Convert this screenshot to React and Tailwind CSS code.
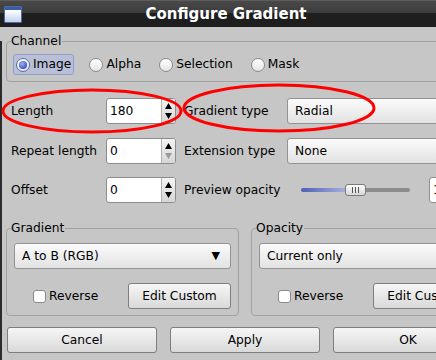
function Triangle({ up, disabled }) {
    return (
        <svg width="7" height="6" viewBox="0 0 7 6" className="block">
            <path d={up ? 'M3.5 0 L7 6 L0 6 Z' : 'M0 0 L7 0 L3.5 6 Z'} fill={disabled ? '#9a9a9a' : '#000'} />
        </svg>
    )
}

function Spin({ value, downDisabled, className = '' }) {
    return (
        <div className={`flex h-[26px] shrink-0 overflow-hidden rounded-[3px] border border-[#8c8c8c] bg-white ${className}`}>
            <div className="flex flex-1 items-center pl-[3px]">{value}</div>
            <div className="flex w-[14px] flex-col items-center justify-center gap-[4px] border-l border-[#b0b0b0] bg-[linear-gradient(to_bottom,#f4f4f4,#d6d6d6)]">
                <Triangle up />
                <Triangle disabled={downDisabled} />
            </div>
        </div>
    )
}

function Combo({ children, arrow, className = '' }) {
    return (
        <div className={`flex h-[26px] shrink-0 items-center rounded-[3px] border border-[#939393] bg-[linear-gradient(to_bottom,#fbfbfb,#e2e2e2)] pl-[7px] pr-[10px] ${className}`}>
            <span className="flex-1 whitespace-nowrap">{children}</span>
            {arrow ? <span className="text-[11px]">▼</span> : null}
        </div>
    )
}

function Button({ children, className = '' }) {
    return (
        <div className={`flex h-[26px] shrink-0 items-center justify-center whitespace-nowrap rounded-[3px] border border-[#7e7e7e] bg-[linear-gradient(to_bottom,#f6f6f6,#d9d9d9)] ${className}`}>
            {children}
        </div>
    )
}

function Radio({ label, checked }) {
    return (
        <div
            className={`flex h-[21px] shrink-0 items-center gap-[3px] rounded-[3px] border px-[2px] ${
                checked ? 'border-[#8e9dc8] bg-[#b8bfd7]' : 'border-transparent'
            }`}
        >
            <span
                className={`flex h-[14px] w-[14px] items-center justify-center rounded-full border bg-[linear-gradient(to_bottom,#ffffff,#e4e4e4)] ${
                    checked ? 'border-[#5b6aa5]' : 'border-[#8a8a8a]'
                }`}
            >
                {checked ? (
                    <span className="h-[8px] w-[8px] rounded-full bg-[radial-gradient(circle_at_40%_35%,#9fb4f0,#3a56c8_70%)]" />
                ) : null}
            </span>
            <span>{label}</span>
        </div>
    )
}

function Check({ label }) {
    return (
        <div className="flex items-center gap-[3px]">
            <span className="h-[13px] w-[13px] rounded-[3px] border border-[#8a8a8a] bg-white" />
            <span>{label}</span>
        </div>
    )
}

function Group({ label, className = '', children }) {
    return (
        <div className={`relative shrink-0 rounded-[4px] border border-[#a2a2a2] ${className}`}>
            <span className="absolute -top-[8px] left-[4px] bg-[#c6c6c6] pr-[1px] leading-[14px]">{label}</span>
            {children}
        </div>
    )
}

function App() {
    return (
        <div className="relative h-[360px] w-[436px] overflow-hidden bg-[#c6c6c6] font-['DejaVu_Sans',sans-serif] text-[12.25px] text-black">
            <div className="w-[452px]">
                {/* title bar */}
                <div className="relative flex h-[27px] items-center border-t border-[#5c5c5c] bg-[linear-gradient(to_bottom,#494949,#3c3c3c_46%,#1e1e1e_46%,#1e1e1e)] pl-[4px]">
                    <div className="flex h-[17px] w-[18px] flex-col overflow-hidden rounded-[1px] border border-[#4d6aa6]">
                        <div className="h-[3px] bg-[#3b5ba5]" />
                        <div className="flex-1 bg-[linear-gradient(to_bottom,#ffffff,#c4d2ee)]" />
                    </div>
                    <div className="flex-1 text-center text-[15px] font-bold text-white">Configure Gradient</div>
                    <div className="w-[22px]" />
                </div>

                {/* body */}
                <div className="h-[333px] border-l-2 border-[#2c2c2c] pl-[4px]">
                    <Group label="Channel" className="mt-[14px] h-[41px] w-[460px]">
                        <div className="flex gap-[12px] pl-[6px] pt-[12px]">
                            <Radio label="Image" checked />
                            <Radio label="Alpha" />
                            <Radio label="Selection" />
                            <Radio label="Mask" />
                        </div>
                    </Group>

                    <div className="mt-[16px] flex h-[26px] items-center pl-[5px]">
                        <span className="w-[95px] shrink-0">Length</span>
                        <Spin value="180" className="w-[70px]" />
                        <span className="ml-[8px] w-[103px] shrink-0">Gradient type</span>
                        <Combo className="w-[170px]">Radial</Combo>
                    </div>

                    <div className="mt-[14px] flex h-[26px] items-center pl-[5px]">
                        <span className="w-[95px] shrink-0 whitespace-nowrap">Repeat length</span>
                        <Spin value="0" downDisabled className="w-[70px]" />
                        <span className="ml-[8px] w-[103px] shrink-0 whitespace-nowrap">Extension type</span>
                        <Combo className="w-[170px]">None</Combo>
                    </div>

                    <div className="mt-[13px] flex h-[26px] items-center pl-[5px]">
                        <span className="w-[95px] shrink-0">Offset</span>
                        <Spin value="0" className="w-[70px]" />
                        <span className="ml-[8px] w-[117px] shrink-0 whitespace-nowrap">Preview opacity</span>
                        <div className="relative flex h-[14px] w-[109px] shrink-0 items-center">
                            <div className="flex h-[4px] w-full overflow-hidden rounded-full">
                                <div className="w-[46px] bg-[linear-gradient(to_right,#4f5fb4,#a7b2de)]" />
                                <div className="flex-1 bg-[#8c8c8c]" />
                            </div>
                            <div className="absolute left-[44px] top-[1px] flex h-[12px] w-[21px] items-center justify-center gap-[2px] rounded-[3px] border border-[#7a7a7a] bg-[linear-gradient(to_bottom,#fbfbfb,#d8d8d8)]">
                                <span className="h-[6px] w-px bg-[#555]" />
                                <span className="h-[6px] w-px bg-[#555]" />
                                <span className="h-[6px] w-px bg-[#555]" />
                            </div>
                        </div>
                        <Spin value="100" className="ml-[19px] w-[60px]" />
                    </div>

                    <div className="mt-[25px] flex gap-[12px]">
                        <Group label="Gradient" className="h-[88px] w-[233px] px-[7px] pt-[14px]">
                            <Combo arrow>A to B (RGB)</Combo>
                            <div className="mt-[14px] flex items-center">
                                <div className="pl-[19px]">
                                    <Check label="Reverse" />
                                </div>
                                <Button className="ml-auto w-[103px]">Edit Custom</Button>
                            </div>
                        </Group>
                        <Group label="Opacity" className="h-[88px] w-[233px] px-[7px] pt-[14px]">
                            <Combo arrow>Current only</Combo>
                            <div className="mt-[14px] flex items-center">
                                <div className="pl-[19px]">
                                    <Check label="Reverse" />
                                </div>
                                <Button className="ml-auto w-[103px]">Edit Custom</Button>
                            </div>
                        </Group>
                    </div>

                    <div className="mt-[11px] flex gap-[13px] pl-[1px]">
                        <Button className="w-[150px]">Cancel</Button>
                        <Button className="w-[150px]">Apply</Button>
                        <Button className="w-[150px]">OK</Button>
                    </div>
                </div>
            </div>

            {/* red annotation ellipses drawn over the dialog */}
            <svg className="pointer-events-none absolute left-0 top-0" width="436" height="360">
                <ellipse cx="92" cy="111" rx="89" ry="21" fill="none" stroke="#ff0000" strokeWidth="3" />
                <ellipse cx="279" cy="108" rx="95" ry="23" fill="none" stroke="#ff0000" strokeWidth="3" />
            </svg>
        </div>
    )
}

export default App
